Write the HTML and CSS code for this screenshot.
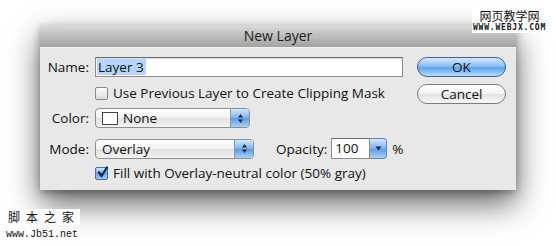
FILE: index.html
```html
<!DOCTYPE html>
<html>
<head>
<meta charset="utf-8">
<link rel="stylesheet" href="styles.css">
</head>
<body>
<div class="mark-top">
<div class="mark-cn">网页教学网</div>
<div class="mark-url">WWW.WEBJX.COM</div>
</div>

<div class="dialog">
<div class="titlebar">New Layer</div>
<div class="dbody">
<div class="form">
<div class="row row-name">
<span class="label">Name:</span>
<div class="textfield"><span class="sel">Layer 3</span></div>
</div>
<div class="row row-clip">
<span class="label"></span>
<span class="check"></span>
<span class="ctext">Use Previous Layer to Create Clipping Mask</span>
</div>
<div class="row row-color">
<span class="label">Color:</span>
<div class="popup popup-color">
<span class="swatch"></span><span class="ptext">None</span>
<span class="arrows"><svg width="7" height="11" viewBox="0 0 7 11"><path d="M3.5 1 L6 4.5 L1 4.5 Z M3.5 10 L6 6.5 L1 6.5 Z" fill="#1c2a44"/></svg></span>
</div>
</div>
<div class="row row-mode">
<span class="label">Mode:</span>
<div class="popup popup-mode">
<span class="ptext">Overlay</span>
<span class="arrows"><svg width="7" height="11" viewBox="0 0 7 11"><path d="M3.5 1 L6 4.5 L1 4.5 Z M3.5 10 L6 6.5 L1 6.5 Z" fill="#1c2a44"/></svg></span>
</div>
<span class="olabel">Opacity:</span>
<div class="numfield">100</div>
<span class="dropbtn"><svg width="7" height="5" viewBox="0 0 7 5"><path d="M0.5 0.5 L6.5 0.5 L3.5 4.5 Z" fill="#1c2a44"/></svg></span>
<span class="pct">%</span>
</div>
<div class="row row-fill">
<span class="label"></span>
<span class="check checked"><svg width="13" height="13" viewBox="0 0 13 13"><path d="M3 6.5 L5.5 10 L11 1.5" stroke="#14243f" stroke-width="2.2" fill="none" stroke-linecap="round" stroke-linejoin="round"/></svg></span>
<span class="ctext">Fill with Overlay-neutral color (50% gray)</span>
</div>
</div>
<div class="buttons">
<div class="btn btn-ok">OK</div>
<div class="btn btn-cancel">Cancel</div>
</div>
</div>
</div>

<div class="mark-bottom">
<div class="mark-jb">脚本之家</div>
<div class="mark-net">www.Jb51.net</div>
</div>
</body>
</html>
```

FILE: styles.css
```css
* {
    box-sizing: border-box;
}

body {
    margin: 0;
    background: #fff;
    font-family: "Open Sans", "DejaVu Sans", sans-serif;
    font-size: 13.5px;
    color: #111;
    width: 556px;
    height: 246px;
    overflow: hidden;
    position: relative;
}

.dialog {
    margin-left: 40px;
    margin-top: 25px;
    width: 476px;
    height: 165px;
    background: #e8e8e8;
    box-shadow: 0 14px 30px rgba(0, 0, 0, 0.6), 0 3px 8px rgba(0, 0, 0, 0.3);
}

.titlebar {
    height: 23px;
    line-height: 22px;
    text-align: center;
    color: #1a1a1a;
    font-size: 14px;
    background: linear-gradient(#dadada, #a2a2a2);
    border-bottom: 1px solid #f2f2f2;
}

.dbody {
    display: flex;
    height: 142px;
}

.form {
    flex: 1;
    padding-top: 9px;
}

.row {
    display: flex;
    align-items: center;
}

.label {
    width: 49px;
    text-align: right;
    margin-right: 6px;
}

.row-name {
    height: 20px;
}

.textfield {
    width: 308px;
    height: 20px;
    background: #fff;
    border: 1px solid #8d8d8d;
    border-top-color: #6d6d6d;
    box-shadow: inset 0 1px 1px rgba(0, 0, 0, 0.15);
    padding: 1px 1px;
    line-height: 16px;
}

.sel {
    display: inline-block;
    background: #b5d5ff;
    padding: 0 2px 0 1px;
}

.row-clip {
    height: 14px;
    margin-top: 9px;
}

.check {
    width: 13px;
    height: 13px;
    border: 1px solid #8a8a8a;
    border-radius: 2px;
    background: linear-gradient(#fbfbfb, #dcdcdc);
    margin-right: 5px;
    flex: none;
    position: relative;
}

.check svg {
    position: absolute;
    left: 0;
    top: -2px;
}

.check.checked {
    background: linear-gradient(#cfe4fb, #6aa6e8 50%, #9bc9f6);
    border-color: #4d6e9e;
}

.row-color {
    height: 20px;
    margin-top: 8px;
}

.popup {
    height: 20px;
    border: 1px solid #8f8f8f;
    border-radius: 4px;
    background: linear-gradient(#ffffff, #f1f1f1 50%, #e0e0e0 51%, #f3f3f3);
    display: flex;
    align-items: center;
    position: relative;
    padding-left: 6px;
}

.popup-color {
    width: 155px;
}

.popup-mode {
    width: 159px;
}

.swatch {
    width: 16px;
    height: 13px;
    background: #fff;
    border: 1px solid #444;
    margin-right: 5px;
}

.ptext {
    flex: 1;
}

.arrows {
    width: 19px;
    height: 18px;
    border-left: 1px solid #7b99c4;
    border-radius: 0 3px 3px 0;
    background: linear-gradient(#d4e7fb, #7cb3ee 50%, #5a9be3 51%, #a7d1fa);
    display: flex;
    align-items: center;
    justify-content: center;
}

.row-mode {
    height: 21px;
    margin-top: 10px;
}

.olabel {
    margin-left: 22px;
    margin-right: 4px;
}

.numfield {
    width: 39px;
    height: 21px;
    background: #fff;
    border: 1px solid #8d8d8d;
    border-top-color: #6d6d6d;
    padding-left: 3px;
    line-height: 18px;
}

.dropbtn {
    width: 17px;
    height: 21px;
    border: 1px solid #6c86ad;
    border-left: none;
    border-radius: 0 4px 4px 0;
    background: linear-gradient(#d4e7fb, #7cb3ee 50%, #5a9be3 51%, #a7d1fa);
    display: flex;
    align-items: center;
    justify-content: center;
}

.pct {
    margin-left: 5px;
}

.row-fill {
    height: 14px;
    margin-top: 7px;
}

.buttons {
    width: 89px;
    margin-right: 10px;
    padding-top: 9px;
}

.btn {
    height: 20px;
    border-radius: 10px;
    text-align: center;
    line-height: 18px;
    border: 1px solid #7b7b7b;
}

.btn-ok {
    border-color: #40618f;
    background: linear-gradient(#d6e8fb, #8cc0f3 45%, #5ea4ec 55%, #b6dcfd);
}

.btn-cancel {
    margin-top: 7px;
    background: linear-gradient(#ffffff, #f2f2f2 50%, #e2e2e2 51%, #f7f7f7);
}

.mark-top {
    position: absolute;
    left: 472px;
    top: 7px;
    background: #fff;
    padding: 0 1px 1px;
    text-align: center;
}

.mark-cn {
    font-family: "Noto Sans CJK SC", sans-serif;
    font-size: 12px;
    line-height: 17px;
}

.mark-url {
    font-family: "DejaVu Sans Mono", monospace;
    font-size: 8px;
    font-weight: bold;
    line-height: 8px;
    letter-spacing: 0.8px;
}

.mark-bottom {
    position: absolute;
    left: 6px;
    top: 208px;
}

.mark-jb {
    font-family: "Noto Sans CJK SC", sans-serif;
    font-size: 12px;
    line-height: 16px;
    letter-spacing: 6px;
    background: #fff;
    display: inline-block;
    padding-left: 2px;
}

.mark-net {
    font-family: "Liberation Mono", monospace;
    font-size: 10px;
    line-height: 12px;
    margin-top: 3px;
}
```
